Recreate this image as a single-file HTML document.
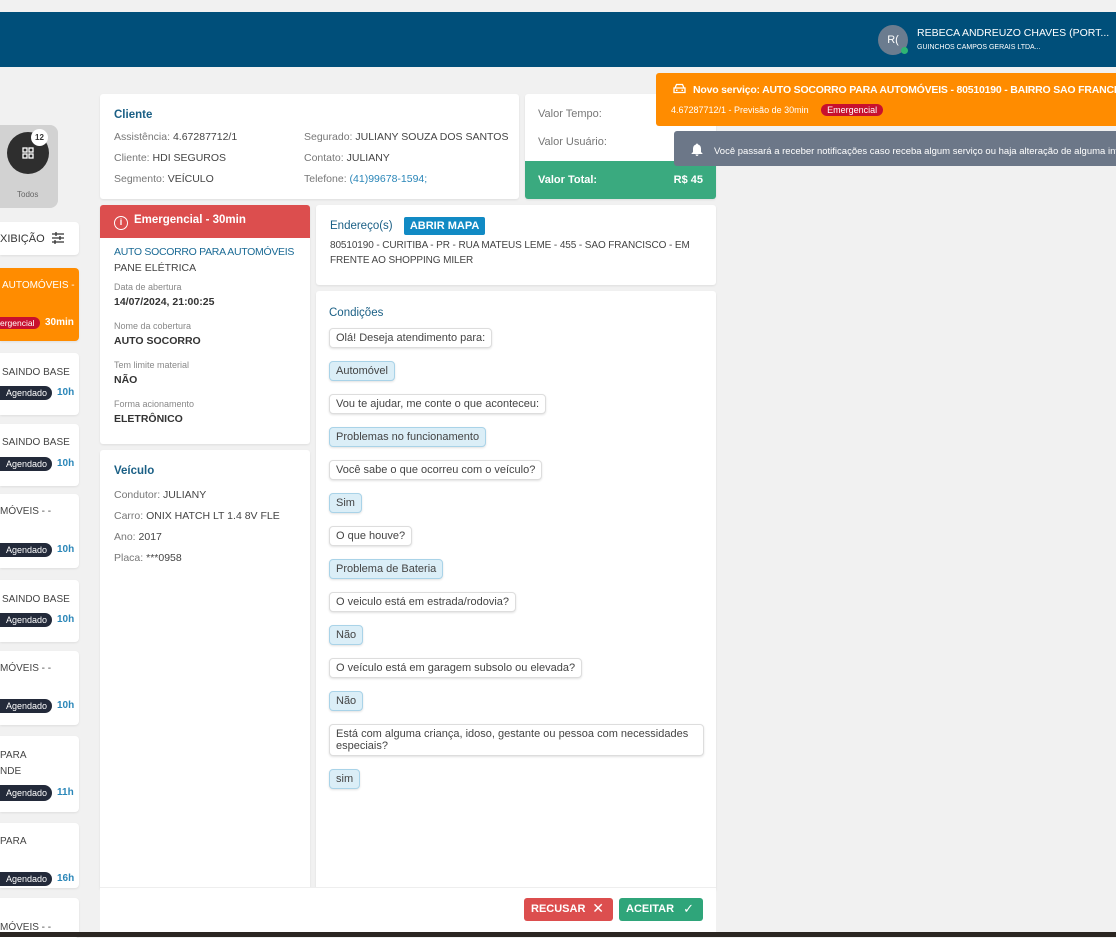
<!DOCTYPE html>
<html><head><meta charset="utf-8"><style>
*{box-sizing:border-box;margin:0;padding:0}
body{width:1116px;height:937px;overflow:hidden;background:#f1f1f1;font-family:"Liberation Sans",sans-serif;color:#555;font-size:11px;position:relative}
.abs{position:absolute}
.card{position:absolute;background:#fff;border-radius:3px;box-shadow:0 1px 2px rgba(0,0,0,.08)}
.t{color:#1a5f85;font-size:11.5px;font-weight:bold}
.l{font-size:11px;color:#777;line-height:21px}
.l b{font-weight:normal;color:#444}
.bub{display:inline-block;border:1px solid #ddd;border-radius:4px;padding:3px 6px;font-size:11px;color:#444;background:#fff;box-shadow:0 1px 2px rgba(0,0,0,.12);margin-bottom:13px}
.ans{background:#dbeef7;border-color:#a9d3e8}
.sc{position:absolute;left:0;width:79px;background:#fff;border-radius:0 4px 4px 0;box-shadow:0 1px 2px rgba(0,0,0,.08);font-size:10px;color:#444}
.ag{position:absolute;left:0;background:#232a3a;color:#fff;font-size:9px;border-radius:0 9px 9px 0;padding:2px 5px 2px 6px}
.hr{position:absolute;left:57px;color:#2a86b8;font-size:10px;font-weight:bold}
.sm{font-size:9px;color:#888;line-height:12px}
.bv{font-size:10.5px;color:#333;font-weight:bold;line-height:14px;margin:2px 0 11px}
</style></head><body>
<div class="abs" style="left:0;top:12px;width:1116px;height:55px;background:#004f7a"></div>
<div class="abs" style="left:878px;top:25px;width:30px;height:30px;border-radius:50%;background:#6b7c8f;color:#fff;font-size:11px;text-align:center;line-height:30px">R(</div>
<div class="abs" style="left:901px;top:47px;width:7px;height:7px;border-radius:50%;background:#2fb573"></div>
<div class="abs" style="left:917px;top:27px;color:#fff;font-size:10.5px;white-space:nowrap">REBECA ANDREUZO CHAVES (PORT...</div>
<div class="abs" style="left:917px;top:44px;color:#fff;font-size:7px;white-space:nowrap">GUINCHOS CAMPOS GERAIS LTDA...</div>

<!-- sidebar -->
<div class="abs" style="left:0;top:125px;width:58px;height:83px;background:#d2d2d2;border-radius:0 8px 8px 0"></div>
<div class="abs" style="left:7px;top:132px;width:42px;height:42px;border-radius:50%;background:#2e2e2e"></div>
<div class="abs" style="left:22px;top:147px;width:12px;height:12px">
<svg width="12" height="12" viewBox="0 0 12 12" fill="none" stroke="#fff" stroke-width="1.3"><rect x="1" y="1" width="4" height="4"/><rect x="7" y="1" width="4" height="4"/><rect x="1" y="7" width="4" height="4"/><rect x="7" y="7" width="4" height="4"/></svg></div>
<div class="abs" style="left:31px;top:129px;width:17px;height:17px;border-radius:50%;background:#fff;font-size:8px;font-weight:bold;color:#333;text-align:center;line-height:17px">12</div>
<div class="abs" style="left:17px;top:190px;font-size:8px;color:#666">Todos</div>
<div class="sc" style="top:222px;height:33px;font-size:11px;color:#333;padding:10px 0 0 0">XIBIÇÃO <svg width="14" height="12" viewBox="0 0 14 12" stroke="#333" stroke-width="1.3" style="vertical-align:-2px;margin-left:3px"><path d="M1 2H13M1 6H13M1 10H13M5 0V4M9 4V8M4 8V12"/></svg></div>
<div class="sc" style="top:268px;height:73px;background:#ff8c00;color:#fff;font-size:10px;padding:12px 0 0 2px">AUTOMÓVEIS -
<div class="abs" style="left:0;top:49px;background:#c8102e;color:#fff;font-size:8.5px;border-radius:0 8px 8px 0;padding:1px 5px 1px 0">ergencial</div>
<div class="abs" style="left:45px;top:49px;font-weight:bold;font-size:10px">30min</div></div>
<div class="sc" style="top:353px;height:62px;padding:14px 0 0 2px">SAINDO BASE<div class="ag" style="top:33px">Agendado</div><div class="hr" style="top:34px">10h</div></div>
<div class="sc" style="top:424px;height:62px;padding:13px 0 0 2px">SAINDO BASE<div class="ag" style="top:33px">Agendado</div><div class="hr" style="top:34px">10h</div></div>
<div class="sc" style="top:494px;height:74px;padding:12px 0 0 0">MÓVEIS - -<div class="ag" style="top:49px">Agendado</div><div class="hr" style="top:50px">10h</div></div>
<div class="sc" style="top:580px;height:62px;padding:14px 0 0 2px">SAINDO BASE<div class="ag" style="top:33px">Agendado</div><div class="hr" style="top:34px">10h</div></div>
<div class="sc" style="top:651px;height:74px;padding:12px 0 0 0">MÓVEIS - -<div class="ag" style="top:48px">Agendado</div><div class="hr" style="top:49px">10h</div></div>
<div class="sc" style="top:736px;height:76px;padding:12px 0 0 0;line-height:16px">PARA<br>NDE<div class="ag" style="top:49px;line-height:12px">Agendado</div><div class="hr" style="top:51px;line-height:12px">11h</div></div>
<div class="sc" style="top:823px;height:65px;padding:13px 0 0 0">PARA<div class="ag" style="top:49px">Agendado</div><div class="hr" style="top:50px">16h</div></div>
<div class="sc" style="top:898px;height:40px;padding:24px 0 0 0">MÓVEIS - -</div>

<!-- client -->
<div class="card" style="left:100px;top:94px;width:419px;height:105px;padding:15px 14px">
<div class="t">Cliente</div>
<div class="abs l" style="left:14px;top:33px;font-size:10.5px">Assistência: <b>4.67287712/1</b><br>Cliente: <b>HDI SEGUROS</b><br>Segmento: <b>VEÍCULO</b></div>
<div class="abs l" style="left:204px;top:33px;font-size:10.5px;white-space:nowrap">Segurado: <b>JULIANY SOUZA DOS SANTOS</b><br>Contato: <b>JULIANY</b><br>Telefone: <span style="color:#2a86b8">(41)99678-1594;</span></div>
</div>
<div class="card" style="left:525px;top:94px;width:191px;height:105px;overflow:hidden">
<div class="abs l" style="left:13px;top:10px">Valor Tempo:</div>
<div class="abs l" style="left:13px;top:38px">Valor Usuário:</div>
<div class="abs" style="left:0;top:67px;width:191px;height:38px;background:#3aaa7f;color:#fff;font-size:11px;font-weight:bold;padding:13px 13px">Valor Total:<span style="float:right">R$ 45</span></div>
</div>

<!-- emergency -->
<div class="card" style="left:100px;top:205px;width:210px;height:239px;overflow:hidden">
<div style="height:33px;background:#dc4e4e;color:#fff;font-weight:bold;font-size:11.5px;padding:9px 14px"><span style="display:inline-block;width:14px;height:14px;border:1.5px solid #fff;border-radius:50%;text-align:center;font-size:9px;line-height:11px;margin-right:6px;vertical-align:-2px">i</span>Emergencial - 30min</div>
<div style="padding:8px 14px">
<div style="color:#1a6a95;font-size:10.5px;white-space:nowrap;letter-spacing:-.3px">AUTO SOCORRO PARA AUTOMÓVEIS</div>
<div style="font-size:10.5px;color:#444;margin:4px 0 7px">PANE ELÉTRICA</div>
<div class="sm">Data de abertura</div><div class="bv">14/07/2024, 21:00:25</div>
<div class="sm">Nome da cobertura</div><div class="bv">AUTO SOCORRO</div>
<div class="sm">Tem limite material</div><div class="bv">NÃO</div>
<div class="sm">Forma acionamento</div><div class="bv">ELETRÔNICO</div>
</div></div>

<div class="card" style="left:100px;top:450px;width:210px;height:440px;padding:15px 14px">
<div class="t">Veículo</div>
<div class="l" style="margin-top:8px;font-size:10.5px">Condutor: <b>JULIANY</b><br>Carro: <b>ONIX HATCH LT 1.4 8V FLE</b><br>Ano: <b>2017</b><br>Placa: <b>***0958</b></div>
</div>

<div class="card" style="left:316px;top:205px;width:400px;height:80px;padding:15px 14px">
<div class="t" style="font-weight:normal">Endereço(s) <span style="background:#118ac4;color:#fff;font-weight:bold;font-size:11px;padding:3px 6px;border-radius:2px;margin-left:8px">ABRIR MAPA</span></div>
<div style="font-size:10px;color:#444;line-height:15px;margin-top:6px;letter-spacing:-.1px">80510190 - CURITIBA - PR - RUA MATEUS LEME - 455 - SAO FRANCISCO - EM FRENTE AO SHOPPING MILER</div>
</div>

<div class="card" style="left:316px;top:291px;width:400px;height:600px;padding:16px 13px">
<div class="t" style="font-weight:normal;margin-bottom:9px">Condições</div>
<div class="bub">Olá! Deseja atendimento para:</div><br>
<div class="bub ans">Automóvel</div><br>
<div class="bub">Vou te ajudar, me conte o que aconteceu:</div><br>
<div class="bub ans">Problemas no funcionamento</div><br>
<div class="bub">Você sabe o que ocorreu com o veículo?</div><br>
<div class="bub ans">Sim</div><br>
<div class="bub">O que houve?</div><br>
<div class="bub ans">Problema de Bateria</div><br>
<div class="bub">O veiculo está em estrada/rodovia?</div><br>
<div class="bub ans">Não</div><br>
<div class="bub">O veículo está em garagem subsolo ou elevada?</div><br>
<div class="bub ans">Não</div><br>
<div class="bub" style="width:375px">Está com alguma criança, idoso, gestante ou pessoa com necessidades especiais?</div><br>
<div class="bub ans">sim</div>
</div>

<div class="abs" style="left:100px;top:887px;width:616px;height:45px;background:#fff;border-top:1px solid #eee"></div>
<div class="abs" style="left:524px;top:898px;width:89px;height:23px;background:#dc4e4e;border-radius:3px;color:#fff;font-weight:bold;font-size:11px;padding:5px 7px">RECUSAR <span style="font-weight:normal;font-size:14px;position:absolute;right:9px;top:2px">✕</span></div>
<div class="abs" style="left:619px;top:898px;width:84px;height:23px;background:#2fa57a;border-radius:3px;color:#fff;font-weight:bold;font-size:11px;padding:5px 7px">ACEITAR <span style="font-weight:normal;font-size:13px;position:absolute;right:9px;top:3px">✓</span></div>
<div class="abs" style="left:0;top:932px;width:1116px;height:5px;background:#2b2622"></div>

<!-- notifications -->
<div class="abs" style="left:656px;top:73px;width:470px;height:53px;background:#ff8c00;border-radius:3px;color:#fff;overflow:hidden;white-space:nowrap">
<div style="position:absolute;left:17px;top:10px;font-size:10.5px;font-weight:bold;letter-spacing:-.2px"><svg width="13" height="11" viewBox="0 0 13 11" fill="none" stroke="#fff" stroke-width="1.3" style="vertical-align:-1px;margin-right:7px"><path d="M2 5 L3.5 1.5 H9.5 L11 5 M1 5 H12 V9.5 H1 Z M3 7.3 H4.5 M8.5 7.3 H10"/></svg>Novo serviço: AUTO SOCORRO PARA AUTOMÓVEIS - 80510190 - BAIRRO SAO FRANCISCO</div>
<div style="position:absolute;left:15px;top:32px;font-size:9px">4.67287712/1 - Previsão de 30min <span style="background:#c8102e;border-radius:8px;padding:1px 6px;margin-left:10px">Emergencial</span></div>
</div>
<div class="abs" style="left:674px;top:131px;width:450px;height:35px;background:#6c7788;border-radius:3px;color:#fff;font-size:9.5px;white-space:nowrap;overflow:hidden;padding:12px 0 0 17px"><svg width="12" height="13" viewBox="0 0 12 13" fill="#fff" style="vertical-align:-2px;margin-right:11px"><path d="M6 0.5C6.6 0.5 7 1 7 1.5C9 2 10 3.6 10 6V9L11.5 10.5V11H0.5V10.5L2 9V6C2 3.6 3 2 5 1.5C5 1 5.4 0.5 6 0.5ZM4.5 11.5H7.5C7.5 12.3 6.8 13 6 13S4.5 12.3 4.5 11.5Z"/></svg>Você passará a receber notificações caso receba algum serviço ou haja alteração de alguma informação</div>
</body></html>
